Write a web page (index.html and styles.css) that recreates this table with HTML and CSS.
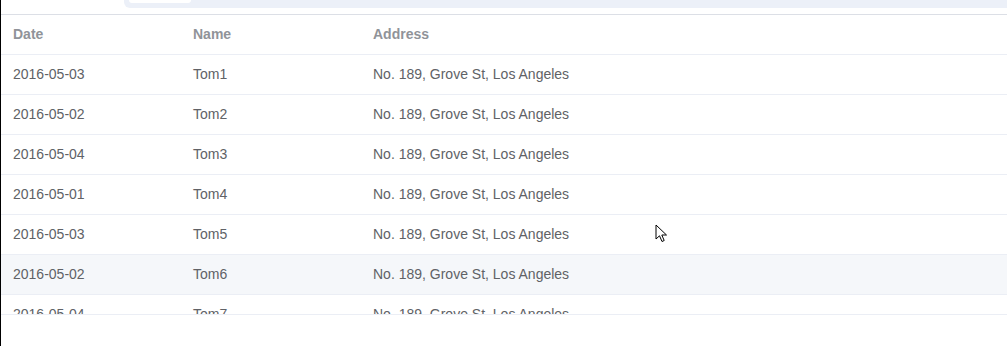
FILE: index.html
```html
<!DOCTYPE html>
<html>
<head>
<meta charset="utf-8">
<link rel="stylesheet" href="styles.css">
</head>
<body>
<div class="page">
  <div class="topbar">
    <div class="topbar-gap"></div>
    <div class="track"><div class="pill"></div></div>
  </div>
  <div class="table">
    <div class="row head">
      <div class="cell c1">Date</div>
      <div class="cell c2">Name</div>
      <div class="cell c3">Address</div>
    </div>
    <div class="body">
      <div class="row"><div class="cell c1">2016-05-03</div><div class="cell c2">Tom1</div><div class="cell c3">No. 189, Grove St, Los Angeles</div></div>
      <div class="row"><div class="cell c1">2016-05-02</div><div class="cell c2">Tom2</div><div class="cell c3">No. 189, Grove St, Los Angeles</div></div>
      <div class="row"><div class="cell c1">2016-05-04</div><div class="cell c2">Tom3</div><div class="cell c3">No. 189, Grove St, Los Angeles</div></div>
      <div class="row"><div class="cell c1">2016-05-01</div><div class="cell c2">Tom4</div><div class="cell c3">No. 189, Grove St, Los Angeles</div></div>
      <div class="row"><div class="cell c1">2016-05-03</div><div class="cell c2">Tom5</div><div class="cell c3">No. 189, Grove St, Los Angeles</div></div>
      <div class="row hover"><div class="cell c1">2016-05-02</div><div class="cell c2">Tom6</div><div class="cell c3">No. 189, Grove St, Los Angeles</div></div>
      <div class="row"><div class="cell c1">2016-05-04</div><div class="cell c2">Tom7</div><div class="cell c3">No. 189, Grove St, Los Angeles</div></div>
      <div class="row"><div class="cell c1">2016-05-01</div><div class="cell c2">Tom8</div><div class="cell c3">No. 189, Grove St, Los Angeles</div></div>
    </div>
  </div>
  <svg class="cursor" width="14" height="20" viewBox="0 0 14 20">
    <path d="M1 1 L1 15 L4.5 11.8 L7 17.5 L9.2 16.5 L6.8 11 L11.5 11 Z" fill="#fff" stroke="#000" stroke-width="1" stroke-linejoin="miter"/>
  </svg>
</div>
</body>
</html>
```
FILE: styles.css
```css
html, body {
  margin: 0;
  padding: 0;
  background: #fff;
}
body {
  font-family: "Liberation Sans", Arial, sans-serif;
  font-size: 14px;
}
.page {
  position: relative;
  width: 1007px;
  height: 346px;
  border-left: 1px solid #000;
  box-sizing: border-box;
  overflow: hidden;
}
.topbar {
  display: flex;
  height: 8px;
  margin-bottom: 6px;
}
.topbar-gap {
  width: 123px;
}
.track {
  flex: 1;
  background: #ecf0f8;
  border-bottom-left-radius: 6px;
  padding-left: 5px;
}
.pill {
  width: 62px;
  height: 3px;
  background: #fff;
  border-bottom-left-radius: 6px;
  border-bottom-right-radius: 6px;
}
.table {
  border-top: 1px solid #dcdfe6;
  border-bottom: 1px solid #ebeef5;
}
.row {
  display: flex;
  height: 40px;
  box-sizing: border-box;
  border-bottom: 1px solid #ebeef5;
  align-items: center;
  color: #606266;
}
.row.head {
  color: #909399;
  font-weight: bold;
}
.row.hover {
  background: #f5f7fa;
}
.body {
  height: 259px;
  overflow: hidden;
}
.cell {
  padding-left: 12px;
  box-sizing: border-box;
  white-space: nowrap;
  line-height: 23px;
}
.c1, .c2 {
  width: 180px;
}
.c3 {
  flex: 1;
}
.cursor {
  position: absolute;
  left: 654px;
  top: 224px;
}
```
